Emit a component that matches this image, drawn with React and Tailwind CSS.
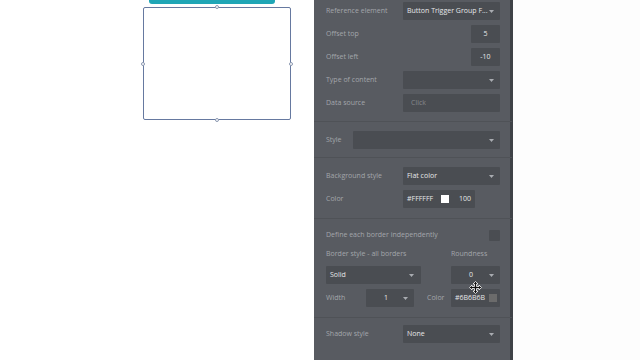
import React from "react";

const Caret = () => (
  <svg width="5" height="3" viewBox="0 0 5 3" className="shrink-0">
    <path d="M0 0 L5 0 L2.5 3 Z" fill="#a9acb1" />
  </svg>
);

const Box = ({ className = "", color = "text-[#e6e7e9]", children }) => (
  <div className={"h-[18px] bg-[#4a4d52] rounded-[1px] flex items-center text-[7px] whitespace-nowrap " + color + " " + className}>
    {children}
  </div>
);

const Label = ({ children, className = "" }) => (
  <div className={"text-[7px] text-[#a3a6ab] whitespace-nowrap " + className}>{children}</div>
);

const Row = ({ label, children }) => (
  <div className="h-[18px] flex items-center justify-between">
    <Label>{label}</Label>
    {children}
  </div>
);

const Divider = () => <div className="h-px bg-[#4f5257] -mx-3" />;

export default function App() {
  return (
    <div
      className="w-[640px] h-[360px] flex bg-white overflow-hidden"
      style={{ fontFamily: '"Open Sans", "Noto Sans", sans-serif' }}
    >
      {/* canvas */}
      <div className="relative w-[314px] h-full bg-white">
        <div className="absolute left-[149px] top-0 w-[126px] h-[4px] bg-[#1fa6b6] rounded-b-[3px]" />
        <div className="absolute left-[143px] top-[7px] w-[148px] h-[113px] border-[1.5px] border-[#6679a0] rounded-[2px]">
          <div className="absolute left-1/2 -top-[3px] -ml-[2px] w-[4px] h-[4px] rounded-full bg-white border border-[#8b98b0]" />
          <div className="absolute left-1/2 -bottom-[3px] -ml-[2px] w-[4px] h-[4px] rounded-full bg-white border border-[#8b98b0]" />
          <div className="absolute top-1/2 -left-[3px] -mt-[2px] w-[4px] h-[4px] rounded-full bg-white border border-[#8b98b0]" />
          <div className="absolute top-1/2 -right-[3px] -mt-[2px] w-[4px] h-[4px] rounded-full bg-white border border-[#8b98b0]" />
        </div>
      </div>

      {/* panel */}
      <div className="relative w-[199px] h-full bg-[#585b61] border-r-[3px] border-[#3f4247] pl-3 pr-[10px] pt-[2px] flex flex-col">
        <div className="flex flex-col gap-[5px]">
          <Row label="Reference element">
            <Box className="w-[97px] justify-between pl-[4px] pr-[6px]">
              <span>Button Trigger Group F...</span>
              <Caret />
            </Box>
          </Row>
          <Row label="Offset top">
            <Box className="w-[29px] justify-center">5</Box>
          </Row>
          <Row label="Offset left">
            <Box className="w-[29px] justify-center">-10</Box>
          </Row>
          <Row label="Type of content">
            <Box className="w-[97px] justify-end pr-[6px]">
              <Caret />
            </Box>
          </Row>
          <Row label="Data source">
            <Box className="w-[97px] pl-[8px]" color="text-[#85888d]">Click</Box>
          </Row>
        </div>

        <div className="mt-[9px]"><Divider /></div>

        <div className="mt-[9px]">
          <Row label="Style">
            <Box className="w-[147px] justify-end pr-[6px]">
              <Caret />
            </Box>
          </Row>
        </div>

        <div className="mt-[8px]"><Divider /></div>

        <div className="mt-[9px] flex flex-col gap-[5px]">
          <Row label="Background style">
            <Box className="w-[97px] justify-between pl-[4px] pr-[6px]">
              <span>Flat color</span>
              <Caret />
            </Box>
          </Row>
          <div className="h-[18px] flex items-center">
            <Label className="w-[77px]">Color</Label>
            <Box className="w-[72px] pl-[4px]">
              <span className="w-[34px]">#FFFFFF</span>
              <span className="w-[8px] h-[8px] bg-white" />
              <span className="ml-[10px]">100</span>
            </Box>
          </div>
        </div>

        <div className="mt-[10px]"><Divider /></div>

        <div className="mt-[10px] h-[12px] flex items-center justify-between">
          <Label>Define each border independently</Label>
          <div className="w-[11px] h-[11px] bg-[#4a4d52] rounded-[1px]" />
        </div>

        <div className="mt-[8px] h-[10px] flex items-center">
          <Label className="w-[125px]">Border style - all borders</Label>
          <Label>Roundness</Label>
        </div>

        <div className="mt-[7px] flex flex-col gap-[5px]">
          <div className="h-[18px] flex items-center justify-between">
            <Box className="w-[95px] justify-between pl-[4px] pr-[7px]">
              <span>Solid</span>
              <Caret />
            </Box>
            <Box className="w-[49px] pr-[6px]">
              <span className="ml-[18px] flex-1">0</span>
              <Caret />
            </Box>
          </div>
          <div className="h-[18px] flex items-center">
            <Label className="w-[40px]">Width</Label>
            <Box className="w-[48px] pr-[6px]">
              <span className="ml-[18px] flex-1">1</span>
              <Caret />
            </Box>
            <Label className="ml-[13px] w-[24px]">Color</Label>
            <Box className="w-[49px] pl-[4px] justify-between pr-[3px]">
              <span>#6B6B6B</span>
              <span className="w-[8px] h-[8px] bg-[#6b6b6b]" />
            </Box>
          </div>
        </div>

        <div className="mt-[10px]"><Divider /></div>

        <div className="mt-[7px]">
          <Row label="Shadow style">
            <Box className="w-[97px] justify-between pl-[4px] pr-[6px]">
              <span>None</span>
              <Caret />
            </Box>
          </Row>
        </div>

        {/* move cursor */}
        <svg
          className="absolute left-[155px] top-[281px]"
          width="13"
          height="13"
          viewBox="0 0 13 13"
        >
          <path
            d="M6.5 0.5 L9 3 L7.5 3 L7.5 5.5 L10 5.5 L10 4 L12.5 6.5 L10 9 L10 7.5 L7.5 7.5 L7.5 10 L9 10 L6.5 12.5 L4 10 L5.5 10 L5.5 7.5 L3 7.5 L3 9 L0.5 6.5 L3 4 L3 5.5 L5.5 5.5 L5.5 3 L4 3 Z"
            fill="#111"
            stroke="#fff"
            strokeWidth="0.8"
            strokeLinejoin="round"
          />
        </svg>
      </div>

      <div className="flex-1 h-full bg-[#fdfdfd]" />
    </div>
  );
}
